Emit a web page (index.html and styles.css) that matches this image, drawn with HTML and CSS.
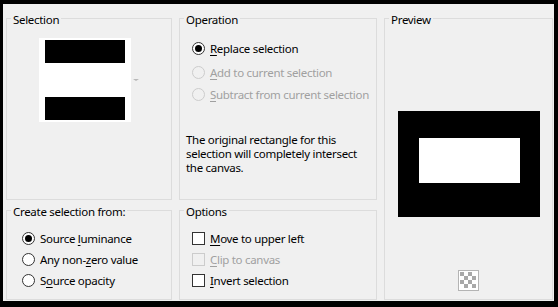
FILE: index.html
```html
<!DOCTYPE html>
<html lang="en">
<head>
  <meta charset="UTF-8">
  <title>Selection From Mask</title>
  <link rel="stylesheet" href="styles.css">
</head>
<body>
  <div class="dialog">
    <fieldset class="group sel">
      <legend>Selection</legend>
      <div class="picker">
        <div class="thumb"><span class="bar"></span><span class="bar"></span></div>
        <span class="drop"></span>
      </div>
    </fieldset>

    <fieldset class="group op">
      <legend>Operation</legend>
      <div class="opt"><span class="radio on"></span><span><u>R</u>eplace selection</span></div>
      <div class="opt off"><span class="radio"></span><span><u>A</u>dd to current selection</span></div>
      <div class="opt off"><span class="radio"></span><span><u>S</u>ubtract from current selection</span></div>
      <p class="note">The original rectangle for this<br>selection will completely intersect<br>the canvas.</p>
    </fieldset>

    <fieldset class="group preview">
      <legend>Preview</legend>
      <div class="canvas"><div class="hole"></div></div>
      <svg class="checker" width="21" height="21" viewBox="0 0 21 21">
        <rect x="0.5" y="0.5" width="20" height="20" fill="#fff" stroke="#b4b4b4"/>
        <g fill="#a8a8a8">
          <rect x="2" y="2" width="4" height="4"/><rect x="10" y="2" width="4" height="4"/>
          <rect x="6" y="6" width="4" height="4"/><rect x="14" y="6" width="4" height="4"/>
          <rect x="2" y="10" width="4" height="4"/><rect x="10" y="10" width="4" height="4"/>
          <rect x="6" y="14" width="4" height="4"/><rect x="14" y="14" width="4" height="4"/>
        </g>
      </svg>
    </fieldset>

    <fieldset class="group from">
      <legend>Create selection from:</legend>
      <div class="opt"><span class="radio on"></span><span>Source <u>l</u>uminance</span></div>
      <div class="opt"><span class="radio"></span><span>Any non-<u>z</u>ero value</span></div>
      <div class="opt"><span class="radio"></span><span>S<u>o</u>urce opacity</span></div>
    </fieldset>

    <fieldset class="group options">
      <legend>Options</legend>
      <div class="opt"><span class="check"></span><span><u>M</u>ove to upper left</span></div>
      <div class="opt off"><span class="check"></span><span><u>C</u>lip to canvas</span></div>
      <div class="opt"><span class="check"></span><span><u>I</u>nvert selection</span></div>
    </fieldset>
  </div>
</body>
</html>
```

FILE: styles.css
```css
:root {
  --face: #f0f0f0;
  --line: #dcdcdc;
  --text: #000000;
  --dim: #a0a0a0;
}
* { box-sizing: border-box; }
body {
  margin: 0;
  width: 558px;
  height: 307px;
  background: #000;
  font-family: 'Noto Sans', sans-serif;
  font-size: 11.5px;
  letter-spacing: -0.3px;
  color: var(--text);
}
.dialog {
  width: 558px;
  height: 307px;
  background: var(--face);
  border: solid #000;
  border-width: 4px 4px 6px 3px;
  padding: 6px 0 0 3px;
  display: grid;
  grid-template-columns: 166px 198px 169px;
  grid-template-rows: 190px 98px;
  column-gap: 7px;
  row-gap: 2px;
}
.group {
  margin: 0;
  padding: 0;
  min-width: 0;
  border: 1px solid var(--line);
}
.group legend {
  margin-left: 4px;
  padding: 3px 2px 0;
  line-height: 13px;
}
.preview { grid-column: 3; grid-row: 1 / span 2; display: flex; flex-direction: column; align-items: center; }
.from { grid-column: 1; grid-row: 2; }
.options { grid-column: 2; grid-row: 2; }

/* selection picker */
.picker { display: flex; align-items: center; margin: 12px 0 0 32px; }
.thumb {
  width: 92px; height: 84px; background: #fff;
  padding: 2px 6px;
  display: flex; flex-direction: column; justify-content: space-between;
}
.bar { display: block; height: 23px; background: #000; }
.drop {
  margin-left: 2px;
  border-left: 3px solid transparent;
  border-right: 3px solid transparent;
  border-top: 2px solid #b8b8b8;
}

/* radios and checks */
.opt { display: flex; align-items: center; height: 23px; gap: 5px; white-space: nowrap; }
.op .opt { padding-left: 12px; }
.op .opt:first-of-type { margin-top: 11px; }
.op .opt:nth-of-type(2) { height: 23px; padding-top: 1px; }
.op .opt:nth-of-type(3) { height: 22px; }
.from .opt, .options .opt { height: 21px; }
.from .opt { padding-left: 15px; }
.options .opt { padding-left: 12px; }
.from .opt:first-of-type, .options .opt:first-of-type { margin-top: 10px; }
.opt.off { color: var(--dim); }
.radio {
  width: 13px; height: 13px; flex: none;
  border: 1px solid #333; border-radius: 50%; background: #fff;
  display: flex; align-items: center; justify-content: center;
}
.radio.on::after { content: ''; width: 7px; height: 7px; border-radius: 50%; background: #000; }
.off .radio { border-color: #cccccc; background: var(--face); }
.check { width: 13px; height: 13px; flex: none; border: 1px solid #333; background: #fff; }
.off .check { border-color: #cccccc; background: var(--face); }
u { text-decoration-thickness: 1px; text-underline-offset: 2px; }

.note { margin: 28px 0 0 6px; line-height: 14px; }

/* preview */
.canvas {
  margin-top: 85px;
  width: 142px; height: 106px; background: #000;
  padding: 27px 20px 0 21px;
}
.hole { width: 101px; height: 45px; background: #fff; }
.checker { margin-top: auto; margin-bottom: 8px; display: block; }
```
